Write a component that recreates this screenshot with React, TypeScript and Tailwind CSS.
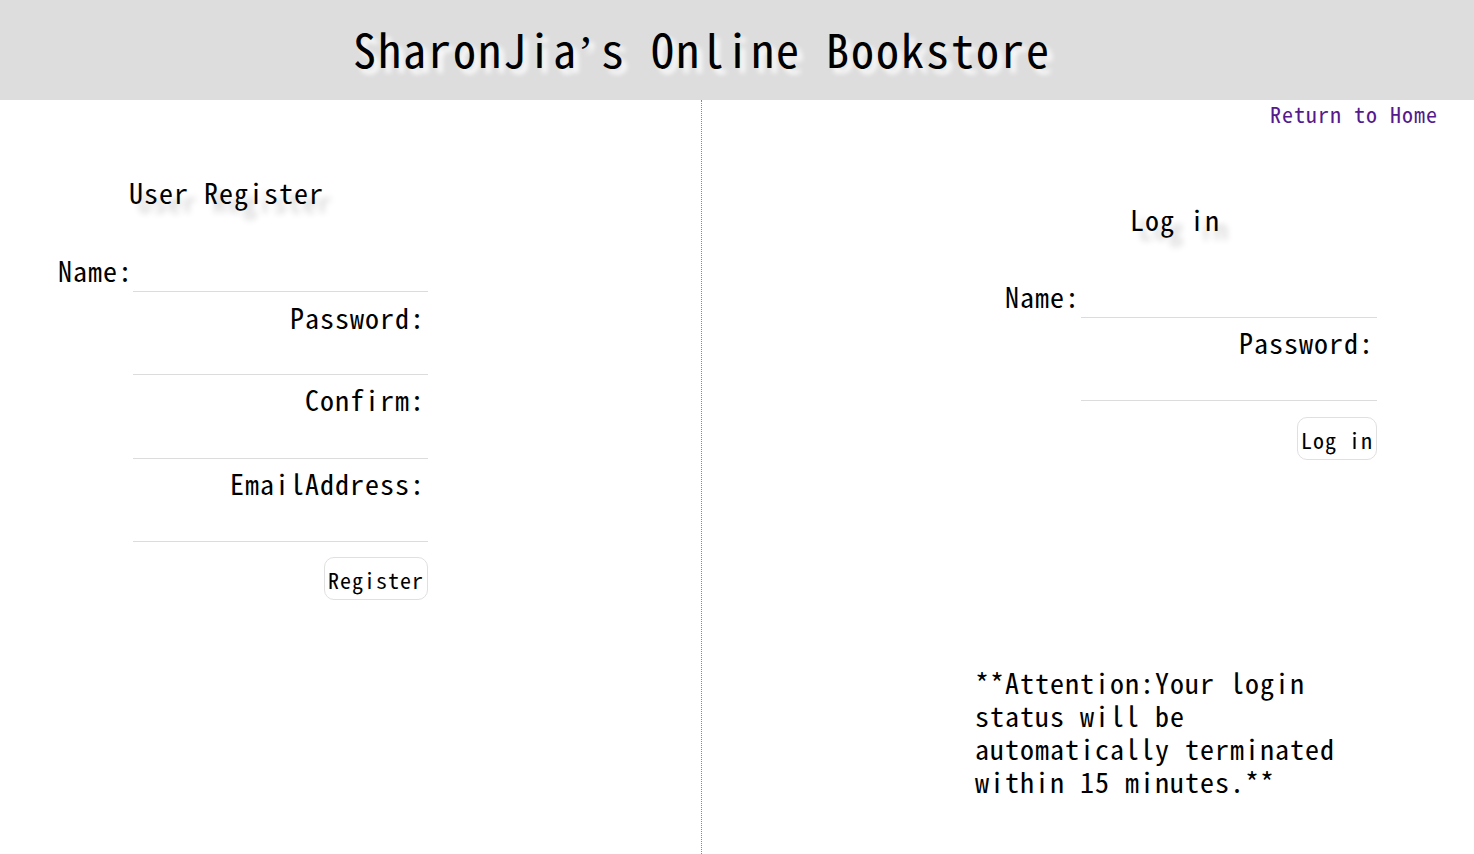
import React from "react";

const FONT = "[font-family:'Noto_Sans_Mono_CJK_SC','Liberation_Mono',monospace]";

function Label({ children, className = "" }: { children: React.ReactNode; className?: string }) {
  return (
    <div className={`text-[28px] leading-[28px] tracking-[1px] text-black ${className}`}>{children}</div>
  );
}

function Line({ h, w = "w-[295px]" }: { h: string; w?: string }) {
  return <input className={`block ${w} ${h} border-0 border-b border-[#dcdcdc] bg-transparent outline-none`} />;
}

export default function App() {
  return (
    <div className={`w-[1474px] h-[854px] overflow-hidden bg-white text-black ${FONT}`}>
      <header className="h-[100px] bg-[#dddddd] pl-[353px] pt-[23px]">
        <h1 className="text-[46px] leading-[50px] tracking-[2px] text-black [text-shadow:5px_5px_5px_#ffffff]">
          SharonJia<span className="inline-block w-[23px] [font-family:'Liberation_Serif',serif]">’</span>s Online Bookstore
        </h1>
      </header>
      <div className="flex h-[754px]">
        {/* Left: register */}
        <div className="w-[702px] border-r border-dotted border-[#888888]">
          <h2 className="mt-[78px] ml-[129px] text-[28px] leading-[28px] tracking-[1px] [text-shadow:9px_9px_6px_#cccccc]">
            User Register
          </h2>
          <div className="ml-[58px] w-[370px] mt-[50px] flex flex-col items-end">
            <div className="flex w-full justify-between items-start">
              <Label>Name:</Label>
              <Line h="h-[36px]" />
            </div>
            <Label className="mt-[11px] mr-[3px]">Password:</Label>
            <Line h="h-[44px]" />
            <Label className="mt-[10px] mr-[3px]">Confirm:</Label>
            <Line h="h-[46px]" />
            <Label className="mt-[10px] mr-[3px]">EmailAddress:</Label>
            <Line h="h-[45px]" />
            <button className="mt-[15px] w-[104px] h-[43px] rounded-[10px] border border-[#e0e0e0] bg-white text-[22px] leading-[22px] tracking-[1px] text-black flex items-center justify-center">
              Register
            </button>
          </div>
        </div>
        {/* Right: login */}
        <div className="flex-1">
          <div className="mt-[2px] pr-[36px] text-right text-[22px] leading-[22px] tracking-[1px] text-[#551a8b]">
            <a href="#">Return to Home</a>
          </div>
          <h2 className="mt-[81px] ml-[428px] text-[28px] leading-[28px] tracking-[1px] [text-shadow:9px_9px_6px_#cccccc]">
            Log in
          </h2>
          <div className="ml-[303px] w-[372px] mt-[49px] flex flex-col items-end">
            <div className="flex w-full justify-between items-start">
              <Label>Name:</Label>
              <Line h="h-[36px]" w="w-[296px]" />
            </div>
            <Label className="mt-[10px] mr-[3px]">Password:</Label>
            <Line h="h-[45px]" w="w-[296px]" />
            <button className="mt-[16px] w-[80px] h-[43px] rounded-[10px] border border-[#e0e0e0] bg-white text-[22px] leading-[22px] tracking-[1px] text-black flex items-center justify-center">
              Log in
            </button>
          </div>
          <p className="mt-[206px] ml-[273px] w-[380px] text-[28px] leading-[33px] tracking-[1px] text-black">
            **Attention:Your login status will be automatically terminated within 15 minutes.**
          </p>
        </div>
      </div>
    </div>
  );
}
